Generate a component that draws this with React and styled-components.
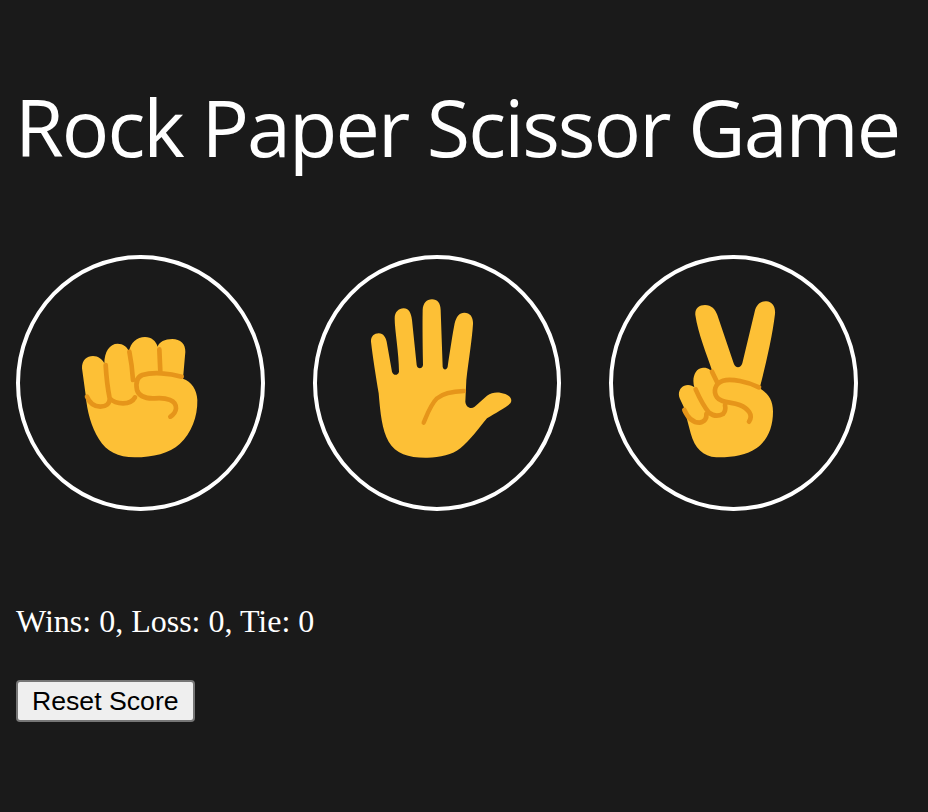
import React from "react";
import styled, { createGlobalStyle } from "styled-components";

const Global = createGlobalStyle`
  html, body { margin: 0; padding: 0; }
  body {
    background: #1a1a1a;
    color: #fff;
    font-family: "Liberation Serif", serif;
    min-height: 812px;
  }
`;
const Page = styled.main`
  padding: 85px 16px 0 16px;
  width: 928px;
  box-sizing: border-box;
  overflow: hidden;
`;
const Title = styled.h1`
  margin: 0 0 0 -1px;
  font-family: "Open Sans", sans-serif;
  font-weight: 400;
  font-size: 79px;
  letter-spacing: -1.93px;
  line-height: 84px;
  white-space: nowrap;
`;
const Choices = styled.div`
  display: flex;
  gap: 48px;
  margin-top: 86px;
`;
const Choice = styled.button`
  width: 248.5px;
  height: 256px;
  box-sizing: border-box;
  border: 4px solid #fff;
  border-radius: 50%;
  background: transparent;
  padding: 0;
  display: flex;
  align-items: center;
  justify-content: center;
`;
const Emoji = styled.svg`
  width: 200px;
  height: 200px;
  flex: none;
`;
const Score = styled.p`
  margin: 92px 0 0 0;
  font-size: 32px;
  line-height: 37px;
`;
const Reset = styled.button`
  display: block;
  margin-top: 40px;
  width: 178.5px;
  height: 42px;
  font-family: "Liberation Sans", sans-serif;
  font-size: 26.67px;
  color: #000;
  background: #efefef;
  border: 2px solid #767676;
  border-radius: 4px;
  padding: 0;
`;
const SKIN = "#FDC036";
const LINE = "#E6951A";

const Fist = () => (
  <Emoji viewBox="-59 -111 600 600" fill="none">
    <path fill={SKIN} d="M67 145C66 120 82 108 100 108C116 108 128 118 134 130C134 95 150 71 174 71C190 71 203 80 208 95C212 68 232 51 256 51C276 51 288 63 294 80C298 66 316 57 338 57C362 57 378 72 377 96L370 176C395 185 412 208 413 240C414 290 395 340 360 372C330 400 280 412 225 412C175 412 140 395 118 358C95 320 82 275 78 225Z" />
    <path stroke={LINE} strokeWidth="14" strokeLinecap="round" d="M82 230C90 250 105 260 122 260C140 260 150 250 150 238M138 135C140 170 144 205 150 235C160 245 175 250 190 250C208 250 220 243 226 232M209 95C214 120 218 150 220 180M299 88L302 156M366 170C330 160 280 155 248 165C230 172 228 190 232 210C238 230 260 236 285 235C320 232 350 240 349 265C348 278 340 285 332 290" />
  </Emoji>
);
const Palm = () => (
  <Emoji viewBox="-55 -21 600 600" fill="none">
    <path fill={SKIN} d="M47 155C46 140 56 130 70 130C85 130 91 143 94 155L110 245C113 257 128 258 131 245C131 190 118 120 118 85C118 66 130 55 145 55C160 55 167 68 170 90L184 225C186 238 201 238 203 225C202 170 201 110 202 60C203 40 214 28 230 28C246 28 256 40 256 60L262 230C264 241 274 241 277 230C283 190 292 130 298 100C303 80 312 68 327 68C345 68 354 82 353 102C350 150 340 210 333 270L330 335C332 353 347 358 358 350L395 317C412 305 430 305 450 312C466 318 472 330 465 340C450 355 420 368 395 385C370 415 345 450 315 475C290 495 250 504 210 503C160 503 120 490 100 455C80 420 75 370 70 310C62 260 52 200 47 155Z" />
    <path stroke={LINE} strokeWidth="13" strokeLinecap="round" d="M205 398C215 375 225 345 245 325C265 308 295 304 326 303" />
  </Emoji>
);
const Peace = () => (
  <Emoji viewBox="-80 -21 600 600" fill="none">
    <path fill={SKIN} d="M107 75C105 55 118 45 136 45C155 45 167 58 173 75L222 220C227 236 243 236 248 220L285 65C290 43 302 33 320 34C338 35 348 50 346 72C338 140 318 225 300 295C325 310 340 330 340 365C340 410 325 450 290 475C260 497 215 503 170 502C130 500 105 475 93 430L72 350L60 325C52 305 65 285 85 285C93 285 100 288 104 292C96 265 105 235 130 233C145 232 155 240 160 250C140 190 115 130 107 75Z" />
    <path stroke={LINE} strokeWidth="14" strokeLinecap="round" d="M74 360C85 385 100 398 120 398C135 396 142 385 140 372M108 298C120 325 133 350 148 368C160 378 175 380 190 372C197 365 198 355 196 345M157 245L175 282M298 292C265 275 215 265 190 272C165 280 160 305 172 322C185 340 215 335 240 345C265 355 282 375 268 395" />
  </Emoji>
);

export default function App() {
  return (
    <>
      <Global />
      <Page>
        <Title>Rock Paper Scissor Game</Title>
        <Choices>
          <Choice aria-label="Rock"><Fist /></Choice>
          <Choice aria-label="Paper"><Palm /></Choice>
          <Choice aria-label="Scissor"><Peace /></Choice>
        </Choices>
        <Score>Wins: 0, Loss: 0, Tie: 0</Score>
        <Reset>Reset Score</Reset>
      </Page>
    </>
  );
}
